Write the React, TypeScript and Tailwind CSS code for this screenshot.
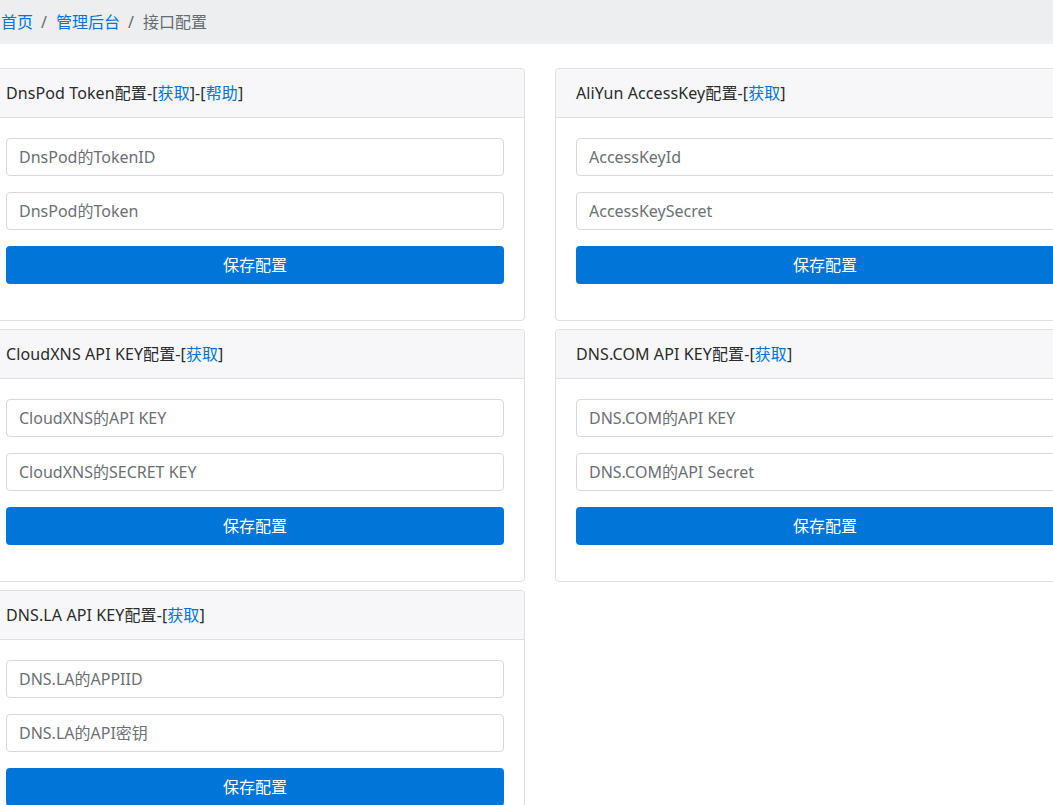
type LinkItem = { label: string };

type Field = { placeholder: string };

type ApiCard = {
  name: string;
  links: LinkItem[];
  fields: Field[];
};

const LEFT: ApiCard[] = [
  {
    name: "DnsPod Token配置",
    links: [{ label: "获取" }, { label: "帮助" }],
    fields: [{ placeholder: "DnsPod的TokenID" }, { placeholder: "DnsPod的Token" }],
  },
  {
    name: "CloudXNS API KEY配置",
    links: [{ label: "获取" }],
    fields: [{ placeholder: "CloudXNS的API KEY" }, { placeholder: "CloudXNS的SECRET KEY" }],
  },
  {
    name: "DNS.LA API KEY配置",
    links: [{ label: "获取" }],
    fields: [{ placeholder: "DNS.LA的APPIID" }, { placeholder: "DNS.LA的API密钥" }],
  },
];

const RIGHT: ApiCard[] = [
  {
    name: "AliYun AccessKey配置",
    links: [{ label: "获取" }],
    fields: [{ placeholder: "AccessKeyId" }, { placeholder: "AccessKeySecret" }],
  },
  {
    name: "DNS.COM API KEY配置",
    links: [{ label: "获取" }],
    fields: [{ placeholder: "DNS.COM的API KEY" }, { placeholder: "DNS.COM的API Secret" }],
  },
];

function ConfigCard({ card }: { card: ApiCard }) {
  return (
    <div className="mb-2 rounded border border-[#dfdfdf] bg-white">
      {/* header */}
      <div className="flex h-[49px] items-center rounded-t border-b border-[#dfdfdf] bg-[#f7f7f9] px-5 text-[16px] tracking-[0.1px] text-[#292b2c]">
        <span>{card.name}</span>
        {card.links.map((l) => (
          <span key={l.label}>
            -[<a href="#" className="text-[#0275d8]">{l.label}</a>]
          </span>
        ))}
      </div>
      {/* body */}
      <div className="p-5">
        {card.fields.map((f) => (
          <div className="mb-4" key={f.placeholder}>
            <input
              placeholder={f.placeholder}
              className="block h-[38px] w-full rounded border border-[#d9d9d9] bg-white px-3 text-[16px] text-[#464a4c] placeholder:text-[#6b7075] outline-none"
            />
          </div>
        ))}
        <div className="mb-4">
          <button className="h-[38px] w-full rounded bg-[#0275d8] text-[16px] text-white">
            保存配置
          </button>
        </div>
      </div>
    </div>
  );
}

export default function App() {
  return (
    <div
      className="-ml-[15px] w-[1125px] bg-white text-[#292b2c]"
      style={{ fontFamily: '"Noto Sans", "Noto Sans CJK SC", sans-serif' }}
    >
      <div className="mb-6 flex h-[44px] items-center bg-[#eceeef] pl-4 text-[16px]">
        <a href="#" className="text-[#0275d8]">首页</a>
        <span className="pl-2 pr-[9px] text-[#636c72]">/</span>
        <a href="#" className="text-[#0275d8]">管理后台</a>
        <span className="pl-2 pr-[9px] text-[#636c72]">/</span>
        <span className="text-[#636c72]">接口配置</span>
      </div>

      <div className="grid grid-cols-[540px_540px] gap-x-[30px]">
        <div>
          {LEFT.map((c) => (
            <ConfigCard card={c} key={c.name} />
          ))}
        </div>
        <div>
          {RIGHT.map((c) => (
            <ConfigCard card={c} key={c.name} />
          ))}
        </div>
      </div>
    </div>
  );
}
